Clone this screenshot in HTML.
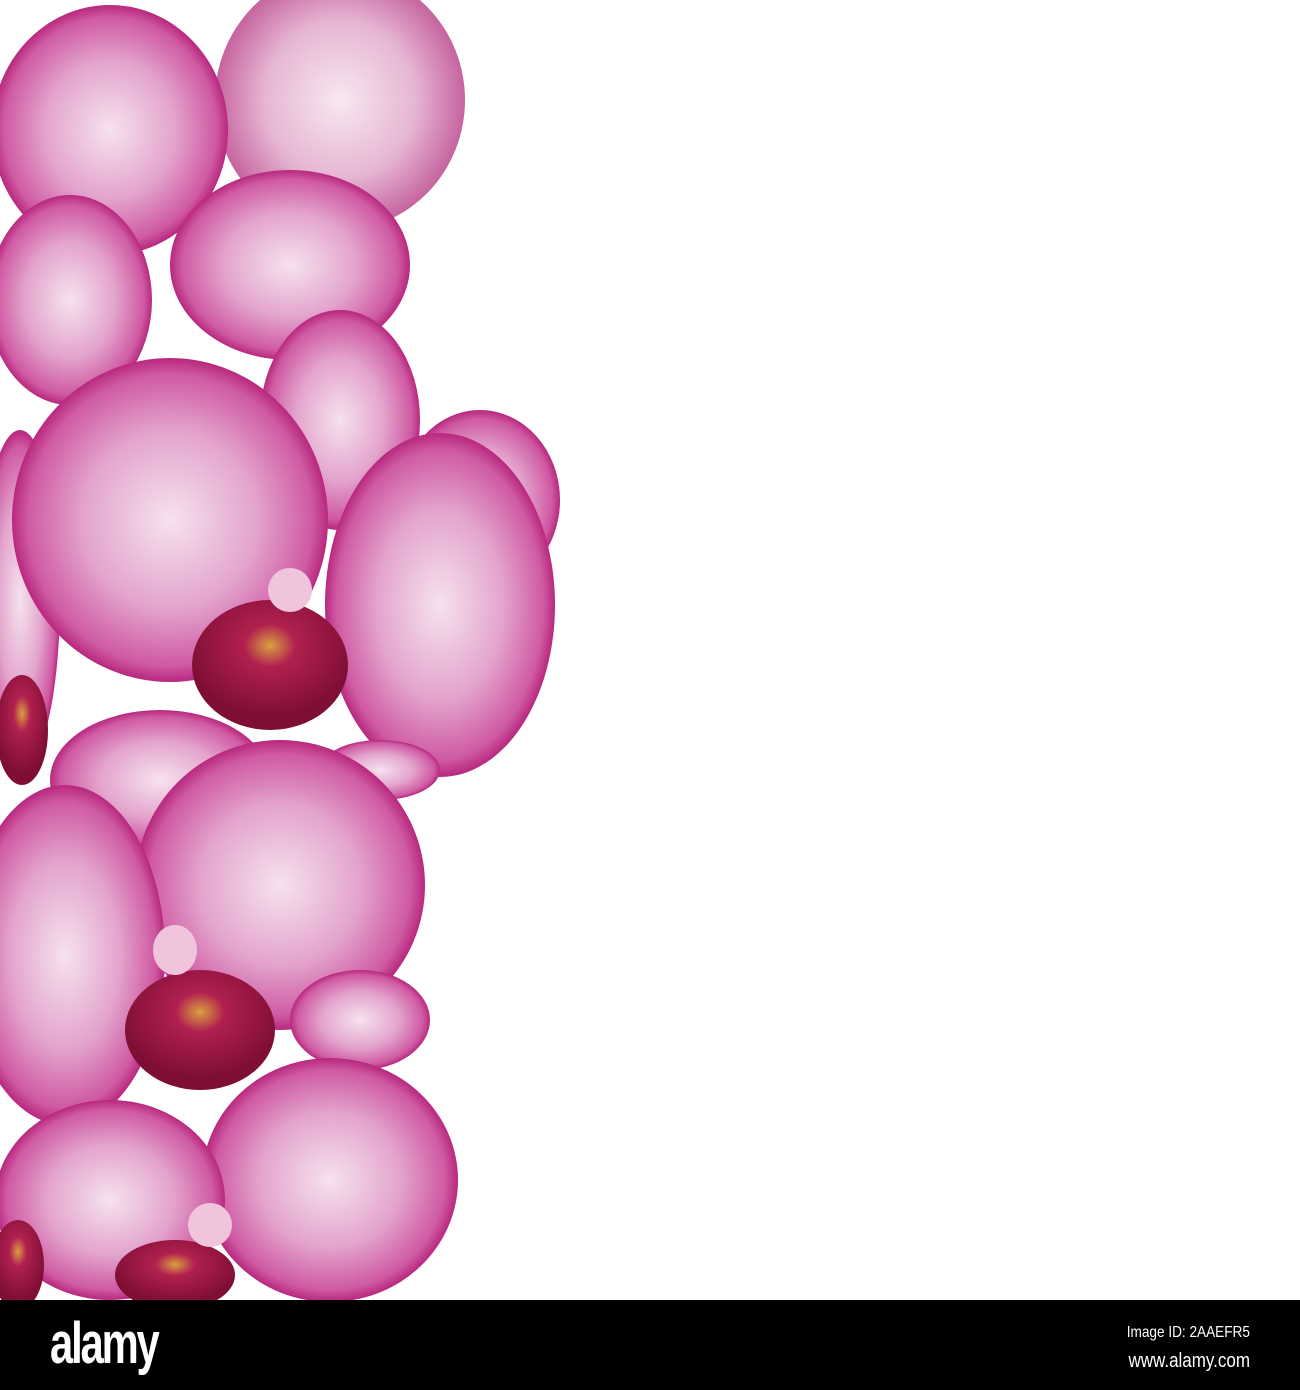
<!DOCTYPE html>
<html><head><meta charset="utf-8"><style>
html,body{margin:0;padding:0;background:#fff;width:1300px;height:1390px;overflow:hidden}
.bar{position:absolute;left:0;top:1300px;width:1300px;height:90px;background:#000;color:#fff;font-family:"Liberation Sans",sans-serif}
.logo{position:absolute;left:50px;top:10px;font-size:58px;font-weight:bold;letter-spacing:-3px;transform:scaleX(0.72);transform-origin:left}
.id{position:absolute;right:50px;top:24px;font-size:16px;transform:scaleX(0.85);transform-origin:right}
.url{position:absolute;right:50px;top:50px;font-size:20px;transform:scaleX(0.85);transform-origin:right}
</style></head><body>
<svg width="1300" height="1300" style="position:absolute;left:0;top:0">
<defs>
<radialGradient id="p" cx="50%" cy="50%" r="50%">
<stop offset="0" stop-color="#f6e2ef"/><stop offset="0.55" stop-color="#e3a4cc"/><stop offset="0.9" stop-color="#cf5aa3"/><stop offset="1" stop-color="#b8287e"/></radialGradient>
<radialGradient id="q" cx="50%" cy="50%" r="50%">
<stop offset="0" stop-color="#f7e8f1"/><stop offset="0.6" stop-color="#e6b6d3"/><stop offset="1" stop-color="#c6649f"/></radialGradient>
<radialGradient id="l" cx="50%" cy="35%" r="55%">
<stop offset="0" stop-color="#d9a040"/><stop offset="0.3" stop-color="#b0204f"/><stop offset="1" stop-color="#7e0e34"/></radialGradient>
</defs>
<ellipse cx="340" cy="100" rx="125" ry="130" fill="url(#q)"/>
<ellipse cx="110" cy="130" rx="118" ry="125" fill="url(#p)"/>
<ellipse cx="290" cy="265" rx="120" ry="95" fill="url(#p)"/>
<ellipse cx="70" cy="300" rx="82" ry="105" fill="url(#p)"/>
<ellipse cx="480" cy="500" rx="80" ry="90" fill="url(#p)"/>
<ellipse cx="340" cy="420" rx="80" ry="110" fill="url(#p)"/>
<ellipse cx="20" cy="600" rx="40" ry="170" fill="url(#p)"/>
<ellipse cx="170" cy="520" rx="158" ry="162" fill="url(#p)"/>
<ellipse cx="440" cy="605" rx="115" ry="172" fill="url(#p)"/>
<ellipse cx="270" cy="665" rx="78" ry="65" fill="url(#l)"/>
<ellipse cx="22" cy="730" rx="26" ry="55" fill="url(#l)"/>
<ellipse cx="380" cy="770" rx="60" ry="30" fill="url(#p)"/>
<ellipse cx="160" cy="780" rx="110" ry="70" fill="url(#p)"/>
<ellipse cx="280" cy="885" rx="145" ry="145" fill="url(#p)"/>
<ellipse cx="360" cy="1020" rx="70" ry="50" fill="url(#p)"/>
<ellipse cx="65" cy="955" rx="100" ry="170" fill="url(#p)"/>
<ellipse cx="200" cy="1030" rx="75" ry="60" fill="url(#l)"/>
<ellipse cx="330" cy="1180" rx="128" ry="122" fill="url(#p)"/>
<ellipse cx="110" cy="1200" rx="115" ry="100" fill="url(#p)"/>
<ellipse cx="175" cy="1275" rx="60" ry="35" fill="url(#l)"/>
<ellipse cx="18" cy="1265" rx="26" ry="45" fill="url(#l)"/>
<ellipse cx="290" cy="590" rx="22" ry="22" fill="#f0c4dc"/>
<ellipse cx="175" cy="950" rx="22" ry="25" fill="#f0c4dc"/>
<ellipse cx="210" cy="1225" rx="22" ry="22" fill="#f0c4dc"/>
</svg>
<div class="bar">
<div class="logo">alamy</div>
<div class="id">Image ID: 2AAEFR5</div>
<div class="url">www.alamy.com</div>
</div>
</body></html>
